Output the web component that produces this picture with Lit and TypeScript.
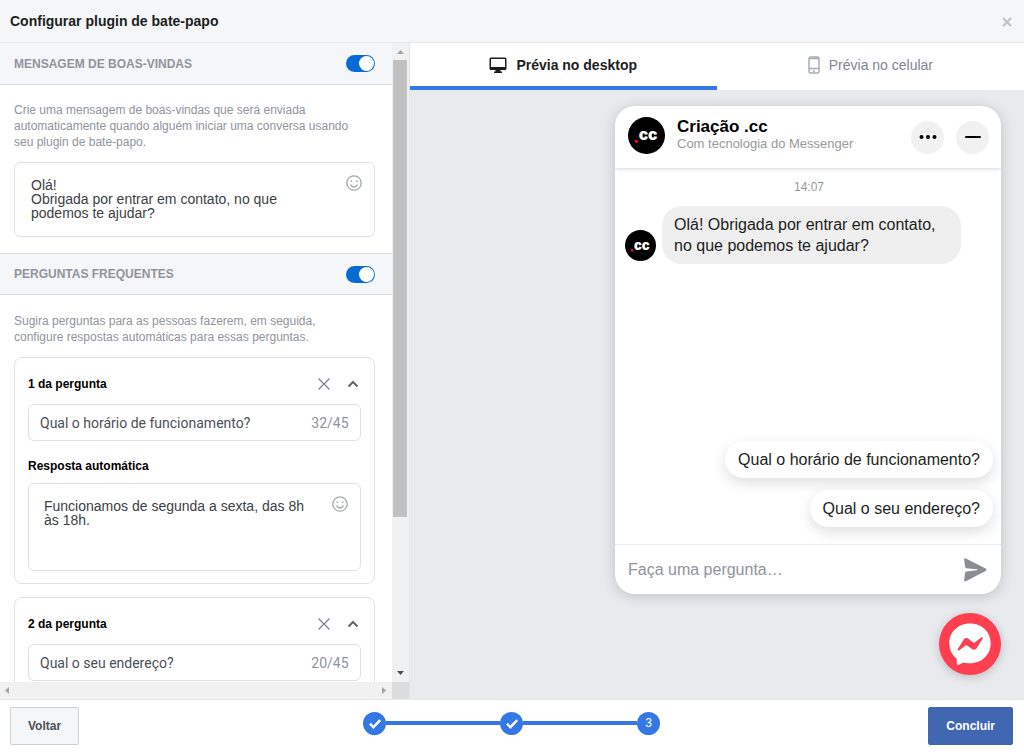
import { LitElement, html, css, svg } from "lit";
import { customElement, property, state } from "lit/decorators.js";

interface Faq {
  question: string;
  answer: string;
}

const smile = html`<svg viewBox="0 0 16 16" width="16" height="16" fill="none" stroke="#a3a8b0" stroke-width="1.3" aria-hidden="true">
  <circle cx="8" cy="8" r="7.2"></circle>
  <path d="M4.6 9.4c.6 1.6 1.9 2.4 3.4 2.4s2.8-.8 3.4-2.4"></path>
  <path d="M5.2 5.5v1.4M10.8 5.5v1.4" stroke-width="1.5"></path>
</svg>`;

const check = html`<svg viewBox="0 0 22 22" width="22" height="22" fill="none" stroke="#fff" stroke-width="2.4" aria-hidden="true">
  <path d="M6 11.600l3.400 3.600 6.800-7"></path>
</svg>`;

@customElement("brand-avatar")
class BrandAvatar extends LitElement {
  @property({ type: Number }) size = 38;

  static styles = css`
    :host { display: block; flex: none; }
    svg { display: block; }
    text { font: 900 16px "Inter", sans-serif; fill: #fff; }
  `;

  render() {
    return html`<svg viewBox="0 0 38 38" width=${this.size} height=${this.size} role="img" aria-label=".cc">
      ${svg`<circle cx="19" cy="19" r="19" fill="#000"></circle>
      <circle cx="8.7" cy="25" r="1.7" fill="#e8121c"></circle>
      <text x="11" y="24">cc</text>`}
    </svg>`;
  }
}

@customElement("toggle-switch")
class ToggleSwitch extends LitElement {
  @property() label = "";

  static styles = css`
    :host { display: block; flex: none; }
    input {
      appearance: none;
      display: block;
      box-sizing: border-box;
      width: 29px;
      height: 17px;
      margin: 0;
      padding: 1px;
      border-radius: 9px;
      background: #ccd0d5;
    }
    input::before {
      content: "";
      display: block;
      width: 15px;
      height: 15px;
      border-radius: 50%;
      background: #fff;
    }
    input:checked { background: #0a6ad4; }
    input:checked::before { margin-left: auto; }
  `;

  render() {
    return html`<input type="checkbox" role="switch" aria-label=${this.label} checked />`;
  }
}

@customElement("faq-card")
class FaqCard extends LitElement {
  @property({ type: Number }) index = 1;
  @property({ attribute: false }) faq: Faq = { question: "", answer: "" };

  static styles = css`
    :host { display: block; }
    .card {
      padding: 13px 13px 12px;
      border: 1px solid #dfe1e5;
      border-radius: 8px;
      color: #1c1e21;
      font-size: 12px;
    }
    .head { display: flex; align-items: center; height: 26px; margin-bottom: 7px; }
    label { display: block; flex: 1; font-weight: bold; line-height: 16px; color: #000; }
    button { display: flex; align-items: center; justify-content: center; padding: 0; border: 0; background: none; }
    .remove, .fold { width: 16px; height: 16px; }
    .fold { margin-left: 13px; }
    .box { display: flex; border: 1px solid #dfe1e5; border-radius: 6px; }
    .question { align-items: center; height: 35px; padding: 0 11px; }
    input, textarea {
      flex: 1;
      min-width: 0;
      padding: 0;
      border: 0;
      outline: 0;
      resize: none;
      background: none;
      color: #4b4f56;
      font: 14px "Roboto", sans-serif;
    }
    textarea {
      height: 57px;
      overflow: hidden;
      color: #3c3f44;
      font: 14px/14px "Liberation Sans", Arial, sans-serif;
    }
    .count { font: 14px "Roboto", sans-serif; color: #8d949e; }
    .second { margin: 17px 0 9px; }
    .answer { gap: 16px; padding: 15px 12px 14px 15px; }
    .emoji { align-self: flex-start; margin: -3px 0 0; }
  `;

  render() {
    const { question, answer } = this.faq;
    return html`<section class="card">
      <div class="head">
        <label for="q">${this.index} da pergunta</label>
        <button class="remove" aria-label="Remover">
          <svg viewBox="0 0 14 14" width="14" height="14" stroke="#7c828c" stroke-width="1.3"><path d="M1.500 1.500l11 11M12.500 1.500l-11 11"></path></svg>
        </button>
        <button class="fold" aria-label="Recolher">
          <svg viewBox="0 0 12 12" width="12" height="12" fill="none" stroke="#606770" stroke-width="2"><path d="M1.500 8.500L6 4l4.500 4.500"></path></svg>
        </button>
      </div>
      <div class="box question">
        <input id="q" .value=${question} />
        <span class="count">${question.length}/45</span>
      </div>
      ${answer
        ? html`<label class="second" for="a">Resposta automática</label>
            <div class="box answer">
              <textarea id="a" .value=${answer}></textarea>
              <button class="emoji" aria-label="Emoji">${smile}</button>
            </div>`
        : null}
    </section>`;
  }
}

@customElement("settings-panel")
class SettingsPanel extends LitElement {
  static styles = css`
    :host {
      display: grid;
      grid-template: minmax(0, 1fr) 17px / minmax(0, 1fr) 17px;
      min-height: 0;
      border-right: 1px solid #e4e5e8;
    }
    .content { overflow: hidden; background: #fff; }
    .bar {
      display: flex;
      align-items: center;
      justify-content: space-between;
      height: 41px;
      padding: 0 17px 0 14px;
      border-bottom: 1px solid #dadde1;
      background: #f5f6f7;
    }
    .bar.faq { border-top: 1px solid #dadde1; height: 40px; }
    h2 { margin: 0; font-size: 12px; color: #90949c; }
    .section { padding: 17px 17px 16px 14px; }
    .section.questions { padding-top: 18px; }
    p { margin: 0 16px 12px 0; font-size: 12px; line-height: 16px; color: #90949c; }
    .welcome {
      display: flex;
      gap: 16px;
      border: 1px solid #dfe1e5;
      border-radius: 6px;
      padding: 15px 12px 14px 16px;
    }
    textarea {
      flex: 1;
      min-width: 0;
      height: 44px;
      padding: 0;
      border: 0;
      outline: 0;
      resize: none;
      overflow: hidden;
      color: #3c3f44;
      font: 14px/14px "Liberation Sans", Arial, sans-serif;
    }
    button { align-self: flex-start; display: flex; padding: 0; border: 0; background: none; margin-top: -3px; }
    .cards { display: grid; gap: 13px; }
    .vertical, .horizontal { display: flex; align-items: center; background: #f1f1f1; }
    .vertical { flex-direction: column; }
    .thumb { width: 14px; flex: 0 0 71.5%; background: #c1c1c1; }
    .arrow { flex: none; width: 17px; height: 17px; }
    .vertical .last { margin-top: auto; }
    .horizontal .last { margin-left: auto; }
    .corner { background: #dcdcdc; }
  `;

  private faqs: Faq[] = [
    { question: "Qual o horário de funcionamento?", answer: "Funcionamos de segunda a sexta, das 8h às 18h." },
    { question: "Qual o seu endereço?", answer: "" },
  ];

  render() {
    return html`
      <div class="content">
        <div class="bar">
          <h2>MENSAGEM DE BOAS-VINDAS</h2>
          <toggle-switch label="Mensagem de boas-vindas"></toggle-switch>
        </div>
        <div class="section">
          <p>Crie uma mensagem de boas-vindas que será enviada automaticamente quando alguém iniciar uma conversa usando seu plugin de bate-papo.</p>
          <div class="welcome">
            <textarea aria-label="Mensagem de boas-vindas" .value=${"Olá!\nObrigada por entrar em contato, no que podemos te ajudar?"}></textarea>
            <button aria-label="Emoji">${smile}</button>
          </div>
        </div>
        <div class="bar faq">
          <h2>PERGUNTAS FREQUENTES</h2>
          <toggle-switch label="Perguntas frequentes"></toggle-switch>
        </div>
        <div class="section questions">
          <p>Sugira perguntas para as pessoas fazerem, em seguida, configure respostas automáticas para essas perguntas.</p>
          <div class="cards">
            ${this.faqs.map((faq, i) => html`<faq-card .index=${i + 1} .faq=${faq}></faq-card>`)}
          </div>
        </div>
      </div>
      <div class="vertical">
        <svg class="arrow" viewBox="0 0 17 17"><path d="M5 11h7L8.500 7z" fill="#a3a3a3"></path></svg>
        <div class="thumb"></div>
        <svg class="arrow last" viewBox="0 0 17 17"><path d="M5 6h7l-3.500 4z" fill="#505050"></path></svg>
      </div>
      <div class="horizontal">
        <svg class="arrow" viewBox="0 0 17 17"><path d="M9 5v7L5 8.500z" fill="#a3a3a3"></path></svg>
        <svg class="arrow last" viewBox="0 0 17 17"><path d="M7 5v7l4-3.500z" fill="#a3a3a3"></path></svg>
      </div>
      <div class="corner"></div>
    `;
  }
}

@customElement("chat-preview")
class ChatPreview extends LitElement {
  static styles = css`
    :host {
      display: flex;
      flex-direction: column;
      align-items: flex-end;
      gap: 19px;
      padding: 16px 23px 24px;
      min-height: 0;
      background: #e9eaed;
    }
    button { padding: 0; border: 0; font-family: inherit; }
    .chat {
      flex: 1;
      display: flex;
      flex-direction: column;
      width: 386px;
      max-width: 100%;
      min-height: 0;
      border-radius: 20px;
      overflow: hidden;
      background: #fff;
      box-shadow: 0 2px 14px rgba(0, 0, 0, 0.18);
      font-size: 16px;
      color: #1c1e21;
    }
    .head {
      display: flex;
      align-items: center;
      gap: 12px;
      height: 62px;
      padding: 0 12px 0 13px;
      box-shadow: 0 1px 4px rgba(0, 0, 0, 0.16);
    }
    .head brand-avatar { margin-bottom: 4px; }
    .name { flex: 1; }
    h3 { margin: 0; font-size: 17px; line-height: 19px; color: #000; }
    .via { margin: 0 0 6px; font-size: 13px; line-height: 16px; color: #999; }
    .round {
      display: flex;
      align-items: center;
      justify-content: center;
      width: 33px;
      height: 33px;
      border-radius: 50%;
      background: #f1f1f1;
    }
    .messages { flex: 1; display: flex; flex-direction: column; padding: 10px 8px 17px 10px; }
    time { align-self: center; font-size: 12px; line-height: 18px; color: #999; }
    .incoming { display: flex; align-items: flex-end; gap: 6px; margin-top: 10px; }
    .incoming brand-avatar { margin-bottom: 3px; }
    .bubble {
      max-width: 275px;
      padding: 8px 12px;
      border-radius: 20px;
      background: #efefef;
      line-height: 21px;
    }
    .replies { display: flex; flex-direction: column; align-items: flex-end; gap: 12px; margin-top: auto; }
    .reply {
      height: 37px;
      padding: 0 13px;
      border-radius: 19px;
      background: #fff;
      font-size: 16px;
      color: #1c1e21;
      box-shadow: 0 5px 14px rgba(0, 0, 0, 0.13);
    }
    .compose {
      display: flex;
      align-items: center;
      height: 49px;
      padding: 0 13px;
      border-top: 1px solid #ebebeb;
    }
    .compose input { flex: 1; min-width: 0; padding: 0; border: 0; outline: 0; font: inherit; }
    .compose input::placeholder { color: #90949c; }
    .send { display: flex; background: none; }
    .launcher {
      display: flex;
      width: 62px;
      height: 62px;
      border-radius: 50%;
      background: #ff3e4f;
      box-shadow: 0 2px 10px rgba(0, 0, 0, 0.2);
    }
  `;

  render() {
    return html`
      <section class="chat">
        <header class="head">
          <brand-avatar .size=${37}></brand-avatar>
          <div class="name">
            <h3>Criação .cc</h3>
            <p class="via">Com tecnologia do Messenger</p>
          </div>
          <button class="round" aria-label="Mais opções">
            <svg viewBox="0 0 18 4" width="18" height="4"><circle cx="2.500" cy="2" r="2"></circle><circle cx="9" cy="2" r="2"></circle><circle cx="15.500" cy="2" r="2"></circle></svg>
          </button>
          <button class="round" aria-label="Minimizar">
            <svg viewBox="0 0 16 2" width="16" height="2"><rect width="16" height="2" rx="1"></rect></svg>
          </button>
        </header>
        <div class="messages">
          <time>14:07</time>
          <div class="incoming">
            <brand-avatar .size=${31}></brand-avatar>
            <div class="bubble">Olá! Obrigada por entrar em contato, no que podemos te ajudar?</div>
          </div>
          <div class="replies">
            <button class="reply">Qual o horário de funcionamento?</button>
            <button class="reply">Qual o seu endereço?</button>
          </div>
        </div>
        <div class="compose">
          <input aria-label="Mensagem" placeholder="Faça uma pergunta…" />
          <button class="send" aria-label="Enviar">
            <svg viewBox="0 0 26 26" width="26" height="26"><path d="M2.200 2.600Q2 .7 3.800 1.500L23.600 11.400Q25.300 12.700 23.600 14L3.800 24.200Q2 25 2.200 23L3 16Q3.200 14.600 4.500 14.400L15 13.300Q16 12.800 15 12.300L4.500 11.200Q3.200 11 3 9.600z" fill="#8a8d91"></path></svg>
          </button>
        </div>
      </section>
      <button class="launcher" aria-label="Messenger">
        <svg viewBox="0 0 62 62" width="62" height="62">
          <path d="M31 10.500c-12 0-20.700 8.500-20.700 19.800 0 6.200 2.600 11.300 6.800 14.900.4.300.6.800.6 1.300l.1 3.900c0 1 1 1.700 2 1.300l4.400-2c.4-.1.800-.2 1.200 0 1.800.4 3.700.6 5.600.6 12 0 20.700-8.700 20.700-20S43 10.500 31 10.500z" fill="#fff"></path>
          <path d="M18.800 36l6-9.500c1-1.600 3.100-2 4.600-.8l4.900 3.700c.5.300 1 .3 1.500 0l6.400-4.900c.9-.7 2 .4 1.400 1.300l-6 9.500c-1 1.500-3.100 1.900-4.600.8l-4.900-3.700c-.5-.3-1-.3-1.500 0l-6.400 4.900c-.9.700-2-.4-1.400-1.300z" fill="#ff3e4f"></path>
        </svg>
      </button>
    `;
  }
}

@customElement("app-root")
class AppRoot extends LitElement {
  @state() private tab = "desktop";

  static styles = css`
    :host {
      display: grid;
      grid-template-rows: auto minmax(0, 1fr) auto;
      height: 100vh;
      font-family: "Liberation Sans", Arial, sans-serif;
      color: #1c1e21;
      background: #fff;
    }
    button { padding: 0; font-family: inherit; }
    .title {
      display: flex;
      align-items: center;
      justify-content: space-between;
      height: 42px;
      padding: 0 11px 0 10px;
      border-bottom: 1px solid #e5e6e9;
      background: #f5f6f7;
    }
    h1 { margin: 0; font: bold 14px/20px "Liberation Sans", Arial, sans-serif; }
    .close { display: flex; border: 0; background: none; }
    .main { display: grid; grid-template-columns: minmax(0, 2fr) minmax(0, 3fr); min-height: 0; }
    .preview { display: grid; grid-template-rows: auto minmax(0, 1fr); min-height: 0; }
    .tabs { display: grid; grid-template-columns: 1fr 1fr; }
    .tab {
      display: flex;
      align-items: center;
      justify-content: center;
      gap: 9px;
      height: 47px;
      border: 0;
      border-bottom: 4px solid transparent;
      background: #fff;
      font-size: 14px;
      color: #7f858f;
    }
    .tab.on { border-color: #3578e5; font-weight: bold; color: #1c1e21; }
    .foot {
      display: grid;
      grid-template-columns: 1fr auto 1fr;
      align-items: center;
      height: 52px;
      padding: 0 11px 0 10px;
      border-top: 1px solid #e5e6e9;
    }
    .action {
      height: 38px;
      padding: 0 17px;
      border-radius: 2px;
      font-size: 12px;
      font-weight: bold;
    }
    .back { justify-self: start; border: 1px solid #ccd0d5; background: #f5f6f7; color: #4b4f56; }
    .done { justify-self: end; border: 1px solid #4267b2; background: #4267b2; color: #fff; }
    .steps { display: flex; align-items: center; margin: 0 0 6px; padding: 0; list-style: none; }
    .step {
      display: flex;
      align-items: center;
      justify-content: center;
      width: 23px;
      height: 23px;
      border-radius: 50%;
      background: #3578e5;
      color: #fff;
      font-size: 12px;
    }
    .line { width: 114px; height: 4px; background: #3578e5; }
  `;

  render() {
    return html`
      <header class="title">
        <h1>Configurar plugin de bate-papo</h1>
        <button class="close" aria-label="Fechar">
          <svg viewBox="0 0 12 12" width="12" height="12" stroke="#bec3c9" stroke-width="2.2"><path d="M2 3l8 8M10 3l-8 8"></path></svg>
        </button>
      </header>
      <main class="main">
        <settings-panel></settings-panel>
        <div class="preview">
          <div class="tabs" role="tablist">
            <button class="tab ${this.tab === "desktop" ? "on" : ""}" role="tab" @click=${() => (this.tab = "desktop")}>
              <svg viewBox="0 0 18 16" width="18" height="16"><path d="M2 .5h14A1.500 1.500 0 0 1 17.500 2v9.500A1.500 1.500 0 0 1 16 13h-4.500v1.500H13V16H5v-1.500h1.500V13H2A1.500 1.500 0 0 1 .5 11.500V2A1.500 1.500 0 0 1 2 .5zM2 2v8h14V2z" fill="#1c1e21" fill-rule="evenodd"></path></svg>
              Prévia no desktop
            </button>
            <button class="tab ${this.tab === "mobile" ? "on" : ""}" role="tab" @click=${() => (this.tab = "mobile")}>
              <svg viewBox="0 0 12 18" width="12" height="18" fill="none" stroke="#a8adb6" stroke-width="1.5"><rect x="1" y="1" width="10" height="16" rx="1.5"></rect><path d="M1 2.500h10M1 12.500h10M5 15h2"></path></svg>
              Prévia no celular
            </button>
          </div>
          <chat-preview></chat-preview>
        </div>
      </main>
      <footer class="foot">
        <button class="action back">Voltar</button>
        <ol class="steps">
          <li class="step">${check}</li>
          <li class="line" role="presentation"></li>
          <li class="step">${check}</li>
          <li class="line" role="presentation"></li>
          <li class="step">3</li>
        </ol>
        <button class="action done">Concluir</button>
      </footer>
    `;
  }
}
